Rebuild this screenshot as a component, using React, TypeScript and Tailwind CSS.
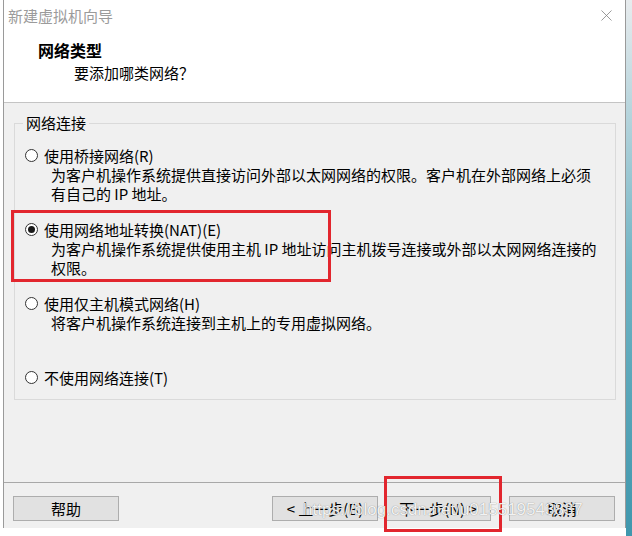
import { X } from "lucide-react";

const options = [
  {
    label: "使用桥接网络(R)",
    desc: ["为客户机操作系统提供直接访问外部以太网网络的权限。客户机在外部网络上必须", "有自己的 IP 地址。"],
    checked: false,
  },
  {
    label: "使用网络地址转换(NAT)(E)",
    desc: ["为客户机操作系统提供使用主机 IP 地址访问主机拨号连接或外部以太网网络连接的", "权限。"],
    checked: true,
  },
  {
    label: "使用仅主机模式网络(H)",
    desc: ["将客户机操作系统连接到主机上的专用虚拟网络。"],
    checked: false,
  },
  { label: "不使用网络连接(T)", desc: [], checked: false },
];

function Radio({ checked }: { checked: boolean }) {
  return (
    <span className="flex h-[13px] w-[13px] shrink-0 items-center justify-center rounded-full border border-[#333] bg-white">
      {checked && <span className="h-[7px] w-[7px] rounded-full bg-[#1a1a1a]" />}
    </span>
  );
}

function Button({ children }: { children: React.ReactNode }) {
  return (
    <div className="flex h-[25px] w-[106px] items-center justify-center border border-[#adadad] bg-[#e1e1e1] text-[15px] leading-none text-black">
      {children}
    </div>
  );
}

export default function App() {
  return (
    <div
      className="relative flex h-[536px] w-[632px] overflow-hidden bg-white text-black"
      style={{ fontFamily: '"Noto Sans CJK SC", "Noto Sans", sans-serif' }}
    >
      <div className="w-[3px] shrink-0 bg-white" />

      {/* dialog */}
      <div className="flex h-[528px] w-[623px] shrink-0 flex-col border-x border-[#9a9a9a]">
        {/* title bar */}
        <div className="flex h-[31px] items-center justify-between bg-white pl-[4px] pr-[9px]">
          <span className="text-[15px] leading-none text-[#9b9b9b]">新建虚拟机向导</span>
          <X size={19} strokeWidth={1} className="text-[#808080]" />
        </div>

        {/* header */}
        <div className="h-[72px] border-b border-[#c4c4c4] bg-white pl-[34px] pt-[9px]">
          <div className="text-[16px] font-bold leading-[20px]">网络类型</div>
          <div className="pl-[36px] pt-[3px] text-[15px] leading-[20px]">要添加哪类网络？</div>
        </div>

        {/* body */}
        <div className="h-[380px] border-b border-[#a8a8a8] bg-[#f0f0f0] pt-[11px]">
          <fieldset className="ml-[10px] mr-[9px] h-[286px] border border-[#dadada] px-[10px]">
            <legend className="ml-[-2px] px-[3px] text-[15px] leading-[18px]">网络连接</legend>
            <div className="mt-[14px] flex flex-col">
              {options.map((o) => (
                <div key={o.label} className="h-[74px] text-[15px] leading-[19px]">
                  <div className="flex items-center gap-[6px]">
                    <Radio checked={o.checked} />
                    <span>{o.label}</span>
                  </div>
                  {o.desc.map((d) => (
                    <div key={d} className="whitespace-nowrap pl-[26px]">
                      {d}
                    </div>
                  ))}
                </div>
              ))}
            </div>
          </fieldset>
        </div>

        {/* buttons */}
        <div className="flex flex-1 items-start bg-[#f0f0f0] pl-[9px] pr-[10px] pt-[13px]">
          <div className="w-[107px]">
            <Button>帮助</Button>
          </div>
          <div className="flex-1" />
          <div className="flex">
            <Button>&lt; 上一步(B)</Button>
            <div className="w-[7px]" />
            <Button>下一步(N) &gt;</Button>
            <div className="w-[18px]" />
            <Button>取消</Button>
          </div>
        </div>
      </div>

      {/* desktop strip */}
      <div className="w-[6px] shrink-0 bg-gradient-to-b from-[#e8ecee] via-[#6fb4c4] to-[#3f97ad]" />

      {/* highlight boxes */}
      <div className="pointer-events-none absolute left-[11px] top-[210px] h-[72px] w-[320px] border-[3px] border-[#e2262e]" />
      <div className="pointer-events-none absolute left-[384px] top-[476px] h-[56px] w-[118px] border-[3px] border-[#e2262e]" />

      {/* watermark */}
      <div
        className="pointer-events-none absolute left-[303px] top-[500px] text-[17px] leading-[20px] text-white/90"
        style={{ fontFamily: '"Liberation Sans", Arial, sans-serif', textShadow: "0 0 1px rgba(0,0,0,0.5)" }}
      >
        https://blog.csdn.net/u015519543837
      </div>
    </div>
  );
}
